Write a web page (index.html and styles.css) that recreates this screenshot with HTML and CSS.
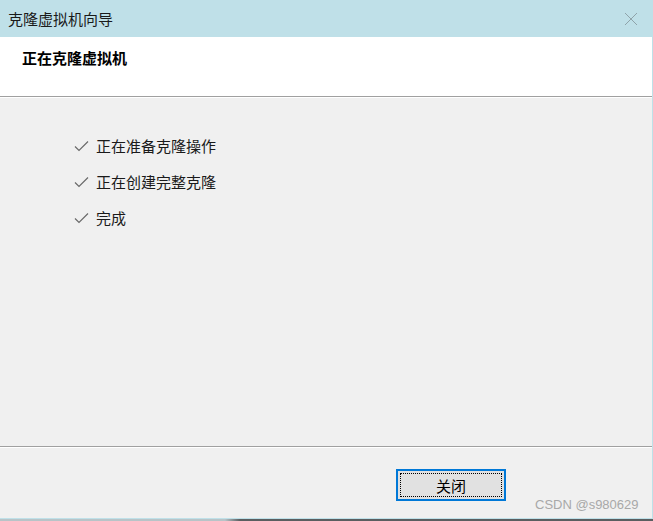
FILE: index.html
```html
<!DOCTYPE html>
<html lang="zh-CN">
<head>
<meta charset="utf-8">
<title>克隆虚拟机向导</title>
<link rel="stylesheet" href="styles.css">
</head>
<body>
<div class="window">
  <div class="titlebar">
    <span class="title">克隆虚拟机向导</span>
    <svg class="close" width="14" height="14" viewBox="0 0 14 14"><path d="M1 1L13 13M13 1L1 13" stroke="#8fa3a9" stroke-width="1" fill="none"/></svg>
  </div>
  <div class="content">
    <div class="header"><span class="heading">正在克隆虚拟机</span></div>
    <div class="main">
      <ul class="steps">
        <li class="step"><svg class="check" width="15" height="12" viewBox="0 0 15 12"><path d="M1 6.5L5 10.5L14 1.5" stroke="#6a6a6a" stroke-width="1.2" fill="none"/></svg><span>正在准备克隆操作</span></li>
        <li class="step"><svg class="check" width="15" height="12" viewBox="0 0 15 12"><path d="M1 6.5L5 10.5L14 1.5" stroke="#6a6a6a" stroke-width="1.2" fill="none"/></svg><span>正在创建完整克隆</span></li>
        <li class="step"><svg class="check" width="15" height="12" viewBox="0 0 15 12"><path d="M1 6.5L5 10.5L14 1.5" stroke="#6a6a6a" stroke-width="1.2" fill="none"/></svg><span>完成</span></li>
      </ul>
    </div>
    <div class="footer">
      <button class="btn"><span class="btn-inner">关闭</span></button>
    </div>
  </div>
  <div class="bottom"></div>
  <span class="watermark">CSDN @s980629</span>
</div>
</body>
</html>
```
FILE: styles.css
```css
html, body {
  margin: 0;
  padding: 0;
}
body {
  width: 653px;
  height: 521px;
  overflow: hidden;
  font-family: "Noto Sans CJK SC", "Noto Sans", sans-serif;
  background: #bfe0e8;
}
.window {
  position: relative;
  width: 653px;
  height: 521px;
  display: flex;
  flex-direction: column;
}
.titlebar {
  height: 37px;
  flex: none;
  background: #bfe0e8;
  display: flex;
  align-items: center;
  justify-content: space-between;
  padding: 0 15px 0 8px;
  box-sizing: border-box;
}
.title {
  font-size: 15px;
  color: #1a1a1a;
}
.close {
  display: block;
}
.content {
  width: 652px;
  flex: 1;
  display: flex;
  flex-direction: column;
  background: #f0f0f0;
}
.header {
  flex: none;
  background: #ffffff;
  border-bottom: 1px solid #a0a0a0;
  box-shadow: 0 1px 0 #ffffff;
  padding: 8px 0 0 22px;
  height: 51px;
}
.heading {
  font-size: 15px;
  font-weight: bold;
  color: #000;
}
.main {
  flex: none;
  height: 350px;
  border-bottom: 1px solid #a0a0a0;
  box-shadow: 0 1px 0 #ffffff;
  box-sizing: border-box;
  padding-top: 30px;
}
.steps {
  list-style: none;
  margin: 0;
  padding: 0 0 0 74px;
}
.step {
  display: flex;
  align-items: center;
  height: 36px;
  font-size: 15px;
  color: #1a1a1a;
}
.check {
  margin-right: 7px;
  margin-top: 2px;
}
.footer {
  flex: 1;
  padding: 22px 0 0 396px;
  box-sizing: border-box;
}
.btn {
  width: 110px;
  height: 32px;
  margin: 0;
  padding: 2px;
  border: 2px solid #0078d7;
  background: #e1e1e1;
  box-sizing: border-box;
  font-family: inherit;
  display: flex;
}
.btn-inner {
  flex: 1;
  border: 1px dotted #000;
  display: flex;
  align-items: center;
  justify-content: center;
  font-size: 15px;
  color: #000;
}
.bottom {
  flex: none;
  height: 2px;
  background: linear-gradient(to right, #b8c4c8 0, #b8c4c8 225px, #5a5e60 240px, #5a5e60 100%);
  border-top: 1px solid #bfe0e8;
}
.watermark {
  position: absolute;
  left: 535px;
  top: 497px;
  font-family: "Liberation Sans", sans-serif;
  font-size: 13px;
  color: #a8a8a8;
}
```
